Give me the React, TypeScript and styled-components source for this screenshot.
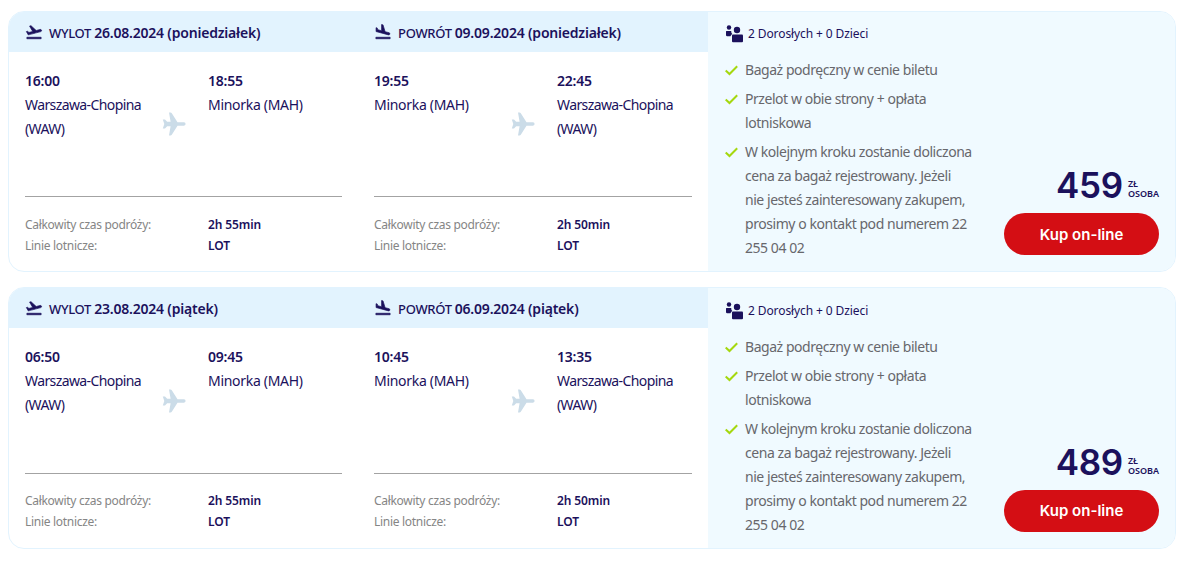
import React from 'react';
import styled, { createGlobalStyle } from 'styled-components';
import { MdFlightLand, MdFlightTakeoff } from 'react-icons/md';

const GlobalStyle = createGlobalStyle`
  * {
    box-sizing: border-box;
  }

  body {
    margin: 0;
    background: #ffffff;
    color: #1b115c;
    font-family: 'Noto Sans', 'Open Sans', sans-serif;
    font-size: 14px;
    line-height: 24px;
  }
`;

const Offers = styled.main`
  display: flex;
  flex-direction: column;
  gap: 15.2px;
  width: 1168px;
  margin-left: 8px;
  padding-top: 10.9px;
`;

const Card = styled.article`
  display: grid;
  grid-template-columns: 699px 1fr;
  height: 261.3px;
  border: 1px solid #e2f3fe;
  border-radius: 16px;
  overflow: hidden;
`;

const Legs = styled.div`
  display: grid;
  grid-template-columns: 349px 350px;
`;

const Leg = styled.section`
  display: flex;
  flex-direction: column;
`;

const LegHeader = styled.header`
  display: flex;
  align-items: center;
  gap: 6px;
  height: 40px;
  padding: 2px 16px 0;
  background: #e2f3fe;
  white-space: nowrap;

  svg {
    flex: none;
    margin-top: -2px;
    stroke-width: 0.9;
  }

  path:not([fill='none']) {
    stroke: currentColor;
  }

  path[fill='none'] {
    stroke: none;
  }
`;

const Direction = styled.span`
  font-size: 13px;
  font-weight: 500;
  letter-spacing: -0.3px;
`;

const LegDate = styled.strong`
  margin-left: -3px;
  font-weight: 600;
  letter-spacing: -0.2px;
`;

const LegBody = styled.div`
  flex: 1;
  display: flex;
  flex-direction: column;
  padding: 17px 16px 14px;
`;

const Route = styled.div`
  display: grid;
  grid-template-columns: 136.5px 46.5px 1fr;
  height: 128.3px;
  border-bottom: 1px solid #a3a3a3;
`;

const Airport = styled.div<{ $tracking: number }>`
  white-space: pre-line;
  letter-spacing: ${({ $tracking }) => $tracking}px;
`;

const Time = styled.strong`
  display: block;
  font-weight: 600;
  letter-spacing: -0.2px;
`;

const PlaneIcon = styled.svg`
  margin-top: 43.4px;
  fill: #cbdce8;
`;

const Details = styled.dl`
  display: grid;
  grid-template-columns: 183px 1fr;
  margin: 16.7px 0 0;
  font-size: 12px;
  line-height: 21px;
`;

const Label = styled.dt`
  color: #858585;
  letter-spacing: -0.3px;
`;

const Value = styled.dd`
  margin: 0;
  font-weight: 600;
  letter-spacing: -0.1px;
`;

const Summary = styled.section`
  display: flex;
  justify-content: space-between;
  padding: 10px 16px 0 17px;
  background: #f0faff;
`;

const Travellers = styled.div`
  display: flex;
  align-items: center;
  gap: 5px;
  height: 25px;
  font-size: 12px;
  letter-spacing: -0.1px;
  white-space: nowrap;
`;

const Perks = styled.ul`
  display: flex;
  flex-direction: column;
  gap: 5px;
  margin: 11.3px 0 0;
  padding: 0;
  list-style: none;
`;

const Perk = styled.li`
  display: flex;
  gap: 7px;
  color: #67676c;
  letter-spacing: -0.45px;
  white-space: pre;

  svg {
    flex: none;
    margin-top: 7px;
  }
`;

const Purchase = styled.div`
  display: flex;
  flex-direction: column;
  align-items: flex-end;
  justify-content: flex-end;
  padding-bottom: 16px;
`;

const Price = styled.div`
  display: flex;
  align-items: flex-end;
  gap: 5px;
  margin-bottom: 13px;
`;

const Amount = styled.span`
  font-family: Inter, sans-serif;
  font-size: 35px;
  font-weight: 600;
  letter-spacing: -0.3px;
  line-height: 30px;
`;

const Unit = styled.span`
  display: flex;
  flex-direction: column;
  margin-bottom: 1px;
  font-size: 9px;
  font-weight: 600;
  line-height: 10px;
`;

const BuyButton = styled.button`
  width: 155px;
  height: 42px;
  border: 0;
  border-radius: 21px;
  background: #d40e14;
  color: #ffffff;
  font: 600 15px Inter, sans-serif;
  cursor: pointer;
`;

const Plane = () => (
  <PlaneIcon width="24" height="24" viewBox="0 0 24 24">
    <path d="M22 10.300H15.500L9.800 1.200Q9.300.4 8.500.4H7L8.600 9.800H5.200L3 7.500H.8L2.300 12 .8 16.500H3L5.200 14.200H8.600L7 23.600H8.500Q9.300 23.600 9.800 22.800L15.500 13.700H22Q23.600 13.400 23.600 12T22 10.300Z" />
  </PlaneIcon>
);

const TravellersIcon = () => (
  <svg width="18" height="18" viewBox="0 0 18 18" fill="currentColor">
    <circle cx="4" cy="2.500" r="2.200" />
    <path d="M1.500 6h4.800c-.2 1.200.2 2.200 1 3-1 .5-1.600 1.200-1.800 2.200H2.200Q1 11.200 1 10V6.500q0-.5.5-.5Z" />
    <circle cx="12" cy="5" r="3.200" />
    <rect x="7" y="9.500" width="11" height="7.800" rx="1" />
  </svg>
);

const CheckIcon = () => (
  <svg width="13" height="11" viewBox="0 0 13 11" fill="none" stroke="#a5d80f" strokeWidth="2">
    <path d="M.7 5.400 4.500 9 12.200 1.300" />
  </svg>
);

interface Place {
  name: string;
  tracking: number;
}

interface Flight {
  date: string;
  from: Place;
  to: Place;
  departure: string;
  arrival: string;
  duration: string;
  airline: string;
}

interface Offer {
  outbound: Flight;
  inbound: Flight;
  price: number;
}

const WARSAW: Place = { name: 'Warszawa-Chopina\n(WAW)', tracking: -0.6 };
const MENORCA: Place = { name: 'Minorka (MAH)', tracking: -0.3 };

const offers: Offer[] = [
  {
    outbound: {
      date: '26.08.2024 (poniedziałek)',
      from: WARSAW,
      to: MENORCA,
      departure: '16:00',
      arrival: '18:55',
      duration: '2h 55min',
      airline: 'LOT',
    },
    inbound: {
      date: '09.09.2024 (poniedziałek)',
      from: MENORCA,
      to: WARSAW,
      departure: '19:55',
      arrival: '22:45',
      duration: '2h 50min',
      airline: 'LOT',
    },
    price: 459,
  },
  {
    outbound: {
      date: '23.08.2024 (piątek)',
      from: WARSAW,
      to: MENORCA,
      departure: '06:50',
      arrival: '09:45',
      duration: '2h 55min',
      airline: 'LOT',
    },
    inbound: {
      date: '06.09.2024 (piątek)',
      from: MENORCA,
      to: WARSAW,
      departure: '10:45',
      arrival: '13:35',
      duration: '2h 50min',
      airline: 'LOT',
    },
    price: 489,
  },
];

const perks = [
  'Bagaż podręczny w cenie biletu',
  'Przelot w obie strony + opłata\nlotniskowa',
  'W kolejnym kroku zostanie doliczona\ncena za bagaż rejestrowany. Jeżeli\nnie jesteś zainteresowany zakupem,\nprosimy o kontakt pod numerem 22\n255 04 02',
];

const FlightLeg: React.FC<{ flight: Flight; inbound?: boolean }> = ({ flight, inbound }) => (
  <Leg>
    <LegHeader>
      {inbound ? <MdFlightLand size={18} /> : <MdFlightTakeoff size={18} />}
      <Direction>{inbound ? 'POWRÓT' : 'WYLOT'}</Direction>
      <LegDate>{flight.date}</LegDate>
    </LegHeader>
    <LegBody>
      <Route>
        <Airport $tracking={flight.from.tracking}>
          <Time>{flight.departure}</Time>
          {flight.from.name}
        </Airport>
        <Plane />
        <Airport $tracking={flight.to.tracking}>
          <Time>{flight.arrival}</Time>
          {flight.to.name}
        </Airport>
      </Route>
      <Details>
        <Label>Całkowity czas podróży:</Label>
        <Value>{flight.duration}</Value>
        <Label>Linie lotnicze:</Label>
        <Value>{flight.airline}</Value>
      </Details>
    </LegBody>
  </Leg>
);

const App: React.FC = () => (
  <>
    <GlobalStyle />
    <Offers>
      {offers.map((offer) => (
        <Card key={offer.price}>
          <Legs>
            <FlightLeg flight={offer.outbound} />
            <FlightLeg flight={offer.inbound} inbound />
          </Legs>
          <Summary>
            <div>
              <Travellers>
                <TravellersIcon />
                2 Dorosłych + 0 Dzieci
              </Travellers>
              <Perks>
                {perks.map((perk) => (
                  <Perk key={perk}>
                    <CheckIcon />
                    {perk}
                  </Perk>
                ))}
              </Perks>
            </div>
            <Purchase>
              <Price>
                <Amount>{offer.price}</Amount>
                <Unit>
                  <span>ZŁ</span>
                  <span>OSOBA</span>
                </Unit>
              </Price>
              <BuyButton type="button">Kup on-line</BuyButton>
            </Purchase>
          </Summary>
        </Card>
      ))}
    </Offers>
  </>
);

export default App;
